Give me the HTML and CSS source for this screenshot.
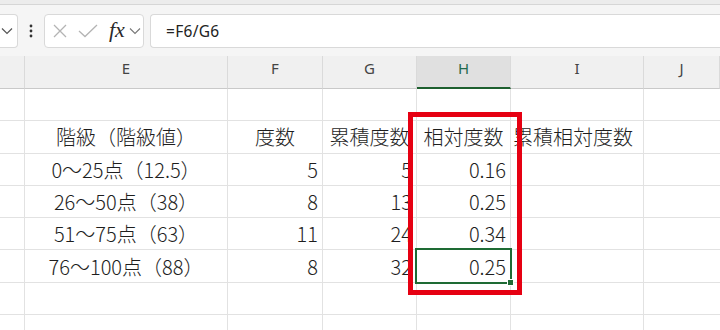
FILE: index.html
```html
<!DOCTYPE html>
<html lang="ja">
<head>
	<meta charset="UTF-8">
	<meta name="viewport" content="width=device-width, initial-scale=1.0">
	<title>相対度数</title>
	<link rel="stylesheet" href="styles.css">
</head>
<body>
	<div class="ribbon-edge"></div>
	<div class="formula-bar">
		<div class="name-box">
			<svg width="12" height="8" viewBox="0 0 12 8"><path d="M1 1.5 L6 6.5 L11 1.5" fill="none" stroke="#555" stroke-width="1.2"/></svg>
		</div>
		<div class="more">
			<svg width="4" height="14" viewBox="0 0 4 14"><circle cx="2" cy="2" r="1.4"/><circle cx="2" cy="7" r="1.4"/><circle cx="2" cy="12" r="1.4"/></svg>
		</div>
		<div class="fx-box">
			<svg class="ic-cancel" width="16" height="14" viewBox="0 0 16 14"><path d="M2 1 L14 13 M14 1 L2 13" fill="none" stroke="#b4b4b4" stroke-width="1.3"/></svg>
			<svg class="ic-enter" width="20" height="14" viewBox="0 0 20 14"><path d="M1 7 L7 12.5 L19 1" fill="none" stroke="#b4b4b4" stroke-width="1.3"/></svg>
			<span class="fx">fx</span>
			<svg class="ic-drop" width="12" height="8" viewBox="0 0 12 8"><path d="M1 1.5 L6 6.5 L11 1.5" fill="none" stroke="#777" stroke-width="1.1"/></svg>
		</div>
		<div class="formula-input">=F6/G6</div>
	</div>

	<div class="sheet">
		<!-- 列見出し -->
		<div class="col-head"></div>
		<div class="col-head">E</div>
		<div class="col-head">F</div>
		<div class="col-head">G</div>
		<div class="col-head selected">H</div>
		<div class="col-head">I</div>
		<div class="col-head">J</div>

		<div class="cell"></div><div class="cell"></div><div class="cell"></div><div class="cell"></div><div class="cell"></div><div class="cell"></div><div class="cell"></div>

		<div class="cell"></div>
		<div class="cell center">階級（階級値）</div>
		<div class="cell center">度数</div>
		<div class="cell center">累積度数</div>
		<div class="cell center">相対度数</div>
		<div class="cell left">累積相対度数</div>
		<div class="cell"></div>

		<div class="cell"></div>
		<div class="cell center">0～25点（12.5）</div>
		<div class="cell num">5</div>
		<div class="cell num">5</div>
		<div class="cell num">0.16</div>
		<div class="cell"></div>
		<div class="cell"></div>

		<div class="cell"></div>
		<div class="cell center">26～50点（38）</div>
		<div class="cell num">8</div>
		<div class="cell num">13</div>
		<div class="cell num">0.25</div>
		<div class="cell"></div>
		<div class="cell"></div>

		<div class="cell"></div>
		<div class="cell center">51～75点（63）</div>
		<div class="cell num">11</div>
		<div class="cell num">24</div>
		<div class="cell num">0.34</div>
		<div class="cell"></div>
		<div class="cell"></div>

		<div class="cell"></div>
		<div class="cell center">76～100点（88）</div>
		<div class="cell num">8</div>
		<div class="cell num">32</div>
		<div class="cell num active">0.25</div>
		<div class="cell"></div>
		<div class="cell"></div>

		<div class="cell"></div><div class="cell"></div><div class="cell"></div><div class="cell"></div><div class="cell"></div><div class="cell"></div><div class="cell"></div>
		<div class="cell last"></div><div class="cell last"></div><div class="cell last"></div><div class="cell last"></div><div class="cell last"></div><div class="cell last"></div><div class="cell last"></div>

		<!-- 強調の赤枠 -->
		<div class="mark"></div>
	</div>
</body>
</html>
```

FILE: styles.css
```css
		/*
		Excel 風の表
		- 上: 数式バー
		- 下: グリッド (列 D の一部 ~ J)
		*/
		html, body{margin: 0; padding: 0;}
		body{
			width: 720px; height: 330px; overflow: hidden;
			background: #fff;
			font-family: "Noto Sans CJK JP", "Noto Sans", sans-serif;
			color: #262626;
		}
		.ribbon-edge{height: 4px; background: #ececec; border-bottom: 1px solid #d6d6d6;}

		/* 数式バー */
		.formula-bar{
			height: 51px; box-sizing: border-box;
			padding-top: 9px;
			background: #f5f5f5;
			display: flex; align-items: flex-start;
		}
		.name-box, .fx-box, .formula-input{
			height: 34px; box-sizing: border-box;
			background: #fff;
			border: 1px solid #d9d9d9; border-radius: 4px;
			display: flex; align-items: center;
		}
		.name-box{width: 18px; border-left: none; border-radius: 0 4px 4px 0; justify-content: flex-end; padding-right: 4px;}
		.more{width: 26px; height: 34px; display: flex; align-items: center; justify-content: center;}
		.more svg{fill: #333;}
		.fx-box{width: 100px; padding-left: 7px;}
		.ic-cancel{margin-right: 10px;}
		.ic-enter{margin-right: 11px;}
		.fx{
			font-family: "Liberation Serif", serif; font-style: italic;
			font-size: 22px; color: #2a2a2a; margin-right: 4px;
			line-height: 1; margin-top: -2px;
		}
		.formula-input{
			flex: 1; margin-left: 6px;
			border-right: none; border-radius: 4px 0 0 4px;
			padding-left: 15px;
			font-family: "Noto Sans", sans-serif; font-size: 15.5px; color: #222;
			letter-spacing: 0.3px;
		}

		/* グリッド */
		.sheet{
			position: relative;
			display: grid;
			grid-template-columns: 25px 203px 95px 94px 94px 133px 76px;
			grid-template-rows: 33px;
			grid-auto-rows: 32.3px;
		}
		.col-head{
			background: #f0f0f0;
			border-right: 1px solid #dadada;
			border-bottom: 1px solid #c9c9c9;
			font-family: "Noto Sans", sans-serif; font-size: 15px; color: #444;
			line-height: 20px; padding-top: 2px;
			text-align: center;
		}
		.col-head.selected{
			background: #e0e0e0; color: #1f6a4e;
			border-bottom: 2px solid #1d5f2e;
		}
		.col-head:last-child, .cell:nth-child(7n){border-right: none;}
		.cell{
			border-right: 1px solid #e2e2e2;
			border-bottom: 1px solid #e2e2e2;
			font-size: 20px; font-weight: 300; color: #1e1e1e;
			display: flex; align-items: center;
			white-space: nowrap;
		}
		.cell.last{height: 16px; border-bottom: none;}
		.center{justify-content: center;}
		.left{justify-content: flex-start; padding-left: 2px;}
		.num{justify-content: flex-end; padding-right: 4px;}

		/* 選択セル */
		.active{position: relative;}
		.active::after{
			content: ""; position: absolute;
			left: -2px; top: -2px; right: -2px; bottom: -2px;
			border: 2px solid #1e6b34;
		}
		.active::before{
			content: ""; position: absolute; z-index: 2;
			right: -4px; bottom: -4px;
			width: 5px; height: 5px;
			background: #1e6b34; border: 1px solid #fff;
		}

		/* 赤枠 */
		.mark{
			position: absolute; left: 408px; top: 56px;
			width: 114px; height: 183px; box-sizing: border-box;
			border: 5px solid #e60012;
			pointer-events: none;
		}
```
